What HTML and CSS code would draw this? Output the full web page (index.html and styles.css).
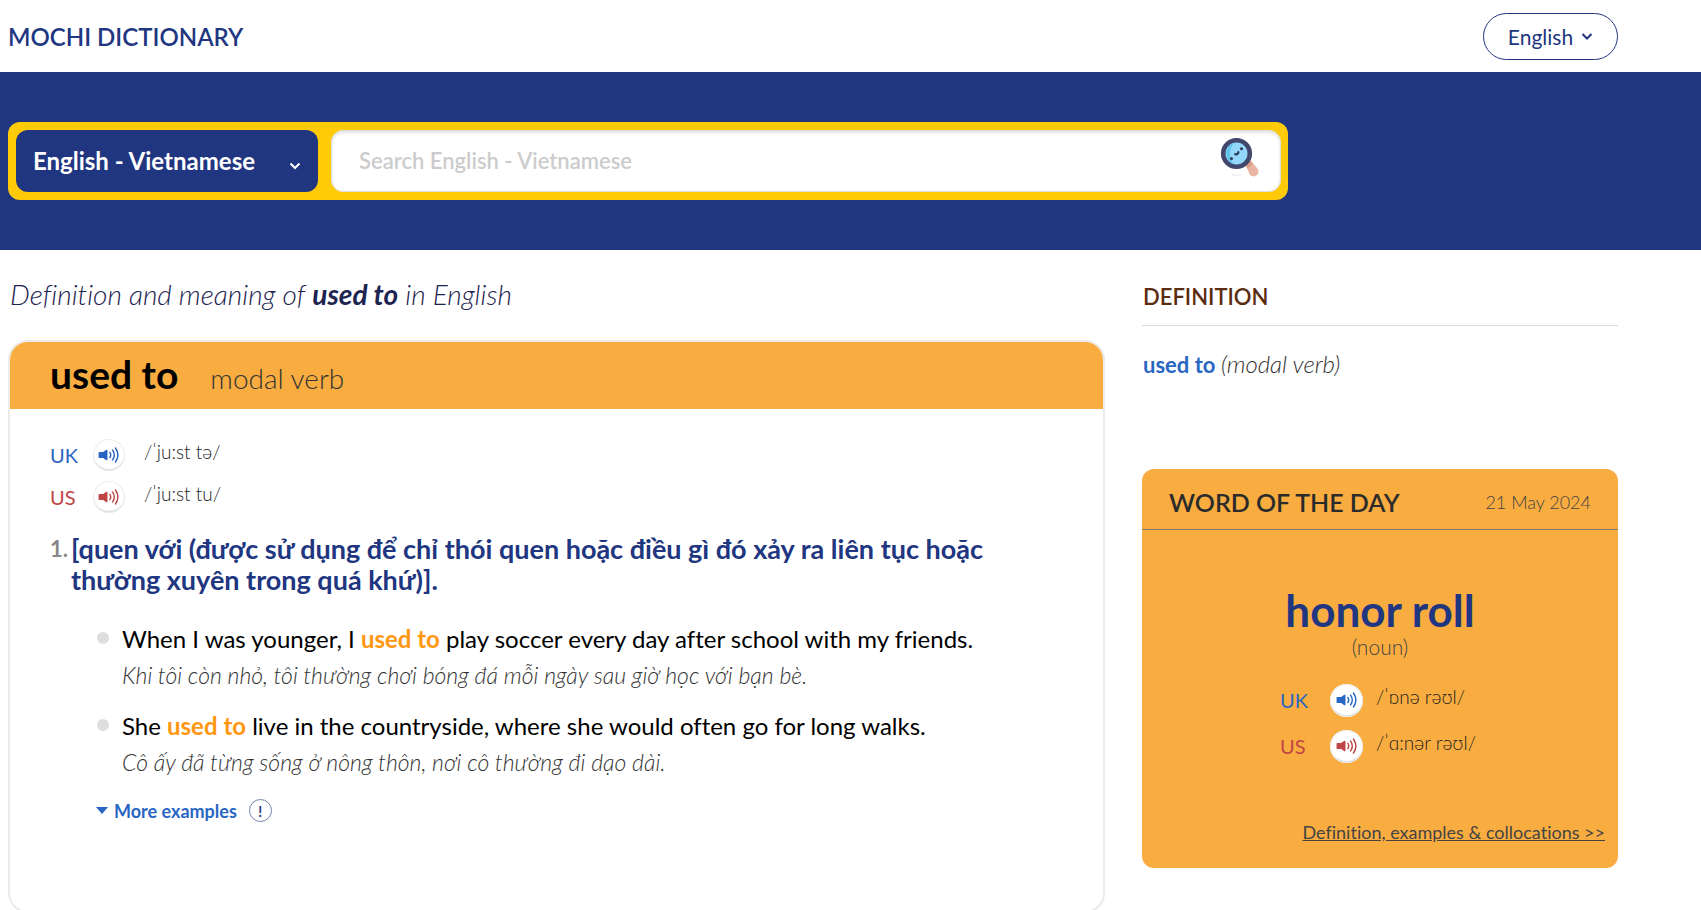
FILE: index.html
```html
<!DOCTYPE html>
<html lang="en">
<head>
<meta charset="utf-8">
<meta name="viewport" content="width=device-width, initial-scale=1">
<title>Mochi Dictionary - used to</title>
<link rel="stylesheet" href="styles.css">
</head>
<body>
<svg class="sprite" aria-hidden="true">
  <symbol id="speaker" viewBox="0 0 24 20">
    <path fill="currentColor" d="M1.500 6.600h4L9 4.300q1.300-.6 1.300.6v10.200q0 1.200-1.300.6L5.500 13.400h-4Q.4 13.400.4 12.400V7.600Q.4 6.600 1.500 6.600z"/>
    <path fill="none" stroke="currentColor" stroke-width="1.600" stroke-linecap="round" d="M13 7.200q1.800 2.800 0 5.600M16 4.500q3.800 5.500 0 11M19.200 2.200q5.400 7.800 0 15.600"/>
  </symbol>
</svg>

<header class="topbar">
  <a class="brand" href="#">MOCHI DICTIONARY</a>
  <button class="lang" type="button">English
    <svg class="lang-arrow" viewBox="0 0 12 8" aria-hidden="true"><path d="M1.500 2 6 6.500l4.500-4.500"/></svg>
  </button>
</header>

<section class="hero">
  <form class="search">
    <span class="pair">
      <select class="pair-select" aria-label="Dictionary"><option>English - Vietnamese</option></select>
      <svg class="pair-arrow" viewBox="0 0 12 8" aria-hidden="true"><path d="M1.500 1.500 6 6l4.500-4.500"/></svg>
    </span>
    <span class="field">
      <input class="query" type="text" placeholder="Search English - Vietnamese" aria-label="Search English - Vietnamese">
      <button class="go" type="button" aria-label="Search">
        <svg viewBox="0 0 40 40" aria-hidden="true">
          <path d="M25 27l5-4 7 8a4.800 4.800 0 0 1-7 7z" fill="#e9b4a2"/>
          <path d="M25 27l5-4 3 3.500-5 5z" fill="#dd9d89"/>
          <circle cx="16.500" cy="16.500" r="13.500" fill="#93d7fb"/>
          <path d="M14 6a11 11 0 0 0 0 21 16 16 0 0 1 0-21z" fill="#5fc4ea"/>
          <circle cx="16.500" cy="16.500" r="13.300" fill="none" stroke="#41486c" stroke-width="4.600"/>
          <g fill="#2c3b4d"><circle cx="21.500" cy="11.800" r="1.500"/><circle cx="11.500" cy="21.500" r="1.500"/></g>
          <path d="M15.200 17.200q2.800.8 3.200-2" fill="none" stroke="#2c3b4d" stroke-width="2.200" stroke-linecap="round"/>
          <path d="M12 38h9" stroke="#e3e1ea" stroke-width="1"/>
        </svg>
      </button>
    </span>
  </form>
</section>

<main class="layout">
  <div class="entry">
    <p class="intro">Definition and meaning of <strong>used to</strong> in English</p>
    <article class="card">
      <header class="card-head">
        <h1 class="headword">used to</h1>
        <span class="pos">modal verb</span>
      </header>
      <div class="card-body">
        <div class="say uk"><span class="region">UK</span><button class="sound" type="button" aria-label="Play UK"><svg><use href="#speaker"/></svg></button><span class="ipa">/ˈju:st tə/</span></div>
        <div class="say us"><span class="region">US</span><button class="sound" type="button" aria-label="Play US"><svg><use href="#speaker"/></svg></button><span class="ipa">/ˈju:st tu/</span></div>
        <div class="sense">
          <span class="num">1.</span>
          <h2 class="meaning">[quen với (được sử dụng để chỉ thói quen hoặc điều gì đó xảy ra liên tục hoặc thường xuyên trong quá khứ)].</h2>
        </div>
        <ul class="examples">
          <li class="example">
            <p class="source">When I was younger, I <b>used to</b> play soccer every day after school with my friends.</p>
            <p class="translation">Khi tôi còn nhỏ, tôi thường chơi bóng đá mỗi ngày sau giờ học với bạn bè.</p>
          </li>
          <li class="example">
            <p class="source">She <b>used to</b> live in the countryside, where she would often go for long walks.</p>
            <p class="translation">Cô ấy đã từng sống ở nông thôn, nơi cô thường đi dạo dài.</p>
          </li>
        </ul>
        <div class="more">
          <button class="more-btn" type="button"><i class="caret"></i>More examples</button>
          <button class="report" type="button" aria-label="Report">!</button>
        </div>
      </div>
    </article>
  </div>

  <aside class="side">
    <h2 class="side-title">DEFINITION</h2>
    <p class="side-item"><a href="#">used to</a> <em>(modal verb)</em></p>
    <section class="wotd">
      <header class="wotd-head">
        <h2 class="wotd-title">WORD OF THE DAY</h2>
        <time class="wotd-date">21 May 2024</time>
      </header>
      <p class="wotd-word">honor roll</p>
      <p class="wotd-pos">(noun)</p>
      <div class="wotd-say">
        <div class="say uk"><span class="region">UK</span><button class="sound" type="button" aria-label="Play UK"><svg><use href="#speaker"/></svg></button><span class="ipa">/ˈɒnə rəʊl/</span></div>
        <div class="say us"><span class="region">US</span><button class="sound" type="button" aria-label="Play US"><svg><use href="#speaker"/></svg></button><span class="ipa">/ˈɑ:nər rəʊl/</span></div>
      </div>
      <a class="wotd-link" href="#">Definition, examples &amp; collocations &gt;&gt;</a>
    </section>
  </aside>
</main>
</body>
</html>
```

FILE: styles.css
```css
* { box-sizing: border-box; }

body {
  margin: 0;
  background: #fff;
  color: #111;
  font-family: Lato, "Noto Sans", "Liberation Sans", sans-serif;
  font-size: 20px;
  font-variant-ligatures: none;
  overflow: hidden;
}

h1, h2, p, ul { margin: 0; padding: 0; }
button, input, select { font-family: inherit; border: 0; padding: 0; background: none; color: inherit; }
.sprite { position: absolute; width: 0; height: 0; }

.topbar {
  display: flex;
  align-items: center;
  justify-content: space-between;
  height: 72px;
  padding: 0 83px 0 8px;
}
.brand { color: #213680; font-size: 24px; font-weight: 600; text-decoration: none; }
.lang {
  display: flex;
  align-items: center;
  justify-content: center;
  gap: 8px;
  width: 135px;
  height: 47px;
  border: 1px solid #213680;
  border-radius: 24px;
  color: #213680;
  font-size: 21px;
}
.lang-arrow, .pair-arrow { width: 12px; height: 8px; fill: none; stroke: currentColor; stroke-width: 2; }

.hero { background: #213680; padding: 50px 413px 50px 8px; }
.search {
  display: flex;
  gap: 13px;
  padding: 8px 7px 8px 8px;
  background: #ffca08;
  border-radius: 12px;
}
.pair { position: relative; flex: 0 0 302px; color: #fff; }
.pair-select {
  appearance: none;
  width: 100%;
  height: 62px;
  padding: 0 17px 2px;
  border-radius: 12px;
  background: #213680;
  font-size: 24px;
  font-weight: 700;
}
.pair-arrow { position: absolute; right: 17px; bottom: 22px; }
.field {
  display: flex;
  flex: 1;
  align-items: center;
  height: 62px;
  padding: 0 20px 2px 27px;
  background: #fff;
  border: 1px solid #dedede;
  border-radius: 12px;
  box-shadow: inset 0 2px 3px #e2e2e2;
}
.query { flex: 1; height: 50px; font-size: 22px; font-weight: 600; outline: 0; }
.query::placeholder { color: #ccc; opacity: 1; }
.go { height: 46px; padding-bottom: 6px; }
.go svg { display: block; width: 40px; height: 40px; }

.layout {
  display: grid;
  grid-template-columns: 1097fr 476fr;
  gap: 37px;
  padding: 0 83px 0 8px;
}

.intro {
  padding: 28px 2px 30px;
  line-height: 32px;
  font-size: 28px;
  font-style: italic;
  font-weight: 300;
  color: #1d2450;
}
.intro strong { font-weight: 700; }

.card { border: 2px solid #ebebeb; border-radius: 20px; overflow: hidden; }
.card-head {
  display: flex;
  align-items: baseline;
  gap: 32px;
  padding: 10px 40px 13px;
  background: #f9ad40;
}
.headword { line-height: 44px; font-size: 39px; font-weight: 700; color: #000; }
.pos { line-height: 32px; font-size: 28px; font-weight: 300; color: #333; }
.card-body { padding: 25px 100px 89px 40px; }

.say { display: flex; align-items: center; height: 42px; }
.region { width: 43px; font-size: 20px; }
.uk { color: #2966c3; }
.us { color: #c04545; }
.sound {
  display: grid;
  place-items: center;
  width: 32px;
  height: 32px;
  border-radius: 50%;
  background: #fff;
  box-shadow: inset 0 0 0 1px #ececec, inset 0 -2px 0 #ddd;
  color: inherit;
}
.sound svg { width: 22px; height: 18px; }
.ipa { align-self: flex-start; padding: 6px 0 0 19px; line-height: 24px; font-size: 19px; font-weight: 300; color: #222; }

.sense { display: flex; gap: 3px; padding-top: 15px; line-height: 31px; font-weight: 700; }
.num { font-size: 22px; color: #888; }
.meaning { font-size: 27px; font-weight: 700; color: #213680; }

.examples { list-style: none; padding: 28px 0 0 46px; }
.example { position: relative; padding: 0 0 20px 26px; }
.example::before {
  content: "";
  position: absolute;
  left: 1px;
  top: 9px;
  width: 12px;
  height: 12px;
  border-radius: 50%;
  background: #dedede;
}
.source { line-height: 32px; font-size: 24px; font-weight: 400; color: #000; }
.source b { color: #ff9710; }
.translation { padding-top: 6px; line-height: 29px; font-size: 23px; font-style: italic; font-weight: 300; color: #333; }

.more { display: flex; align-items: center; gap: 12px; padding: 2px 0 0 46px; }
.more-btn { display: flex; align-items: center; gap: 6px; color: #2966c3; font-size: 18px; font-weight: 700; }
.caret { border: 6px solid transparent; border-top: 7px solid #2966c3; border-bottom: 0; }
.report { width: 23px; height: 23px; border: 1px solid #7580b0; border-radius: 50%; color: #213680; font-size: 16px; font-weight: 600; line-height: 20px; }

.side-title {
  padding: 32px 1px 13px;
  border-bottom: 1px solid #dcdcdc;
  line-height: 30px;
  font-size: 22px;
  font-weight: 600;
  color: #5b2c10;
}
.side-item { padding: 23px 1px 0; line-height: 30px; font-size: 22px; }
.side-item a { color: #2966c3; font-weight: 700; text-decoration: none; }
.side-item em { font-size: 24px; font-weight: 300; color: #333; }

.wotd { display: flex; flex-direction: column; margin-top: 89px; background: #f9ad40; border-radius: 12px; }
.wotd-head {
  display: flex;
  align-items: center;
  justify-content: space-between;
  height: 61px;
  padding: 6px 27px 0;
  border-bottom: 1px solid #7f7868;
}
.wotd-title { font-size: 25px; font-weight: 600; color: #2b2b2b; }
.wotd-date { font-size: 18px; font-weight: 300; color: #444; }
.wotd-word { padding-top: 55px; text-align: center; line-height: 50px; font-size: 44px; font-weight: 700; color: #213680; }
.wotd-pos { text-align: center; line-height: 24px; font-size: 21px; font-weight: 300; color: #444; }
.wotd-say { padding: 18px 0 0 29%; }
.wotd-say .say { height: 46px; }
.wotd-say .region { width: 50px; }
.wotd-say .sound { width: 33px; height: 33px; }
.wotd-say .ipa { padding: 8px 0 0 13px; }
.wotd-link { align-self: flex-end; padding: 51px 13px 24px; line-height: 24px; font-size: 18px; color: #444; }
```
